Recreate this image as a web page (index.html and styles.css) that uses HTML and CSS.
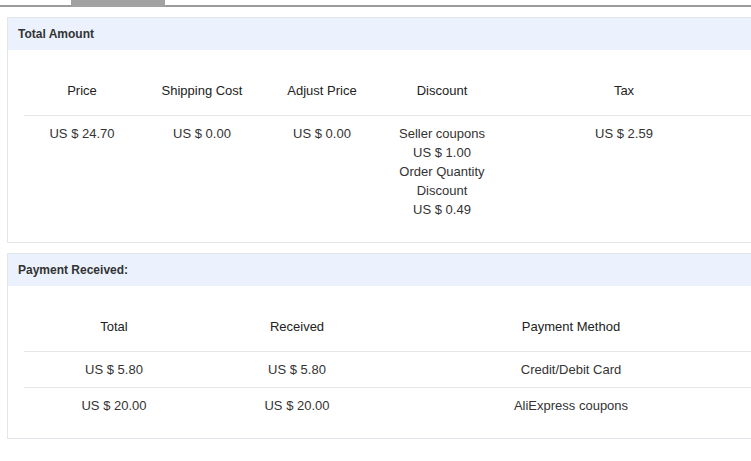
FILE: index.html
```html
<!DOCTYPE html>
<html>
<head>
<meta charset="utf-8">
<link rel="stylesheet" href="styles.css">
</head>
<body>
<div class="tabbar"><div class="tab"></div></div>
<div class="content">
  <section class="panel">
    <div class="panel-head">Total Amount</div>
    <div class="panel-body">
      <table class="grid amount">
        <colgroup><col class="c1"><col class="c2"><col class="c3"><col class="c4"><col class="c5"><col class="c6"></colgroup>
        <thead>
          <tr><th>Price</th><th>Shipping Cost</th><th>Adjust Price</th><th>Discount</th><th>Tax</th><th></th></tr>
        </thead>
        <tbody>
          <tr>
            <td>US $ 24.70</td>
            <td>US $ 0.00</td>
            <td>US $ 0.00</td>
            <td>Seller coupons<br>US $ 1.00<br>Order Quantity<br>Discount<br>US $ 0.49</td>
            <td>US $ 2.59</td>
            <td></td>
          </tr>
        </tbody>
      </table>
    </div>
  </section>
  <section class="panel">
    <div class="panel-head">Payment Received:</div>
    <div class="panel-body">
      <table class="grid payment">
        <colgroup><col class="p1"><col class="p2"><col class="p3"><col class="p4"></colgroup>
        <thead>
          <tr><th>Total</th><th>Received</th><th>Payment Method</th><th></th></tr>
        </thead>
        <tbody>
          <tr><td>US $ 5.80</td><td>US $ 5.80</td><td>Credit/Debit Card</td><td></td></tr>
          <tr class="last"><td>US $ 20.00</td><td>US $ 20.00</td><td>AliExpress coupons</td><td></td></tr>
        </tbody>
      </table>
    </div>
  </section>
</div>
</body>
</html>
```
FILE: styles.css
```css
html, body {
  margin: 0;
  padding: 0;
  background: #fff;
  overflow: hidden;
}
body {
  font-family: "Liberation Sans", Arial, sans-serif;
  font-size: 13px;
  color: #333;
  width: 751px;
}
.tabbar {
  height: 7px;
  position: relative;
  border-bottom: 2px solid #9b9b9b;
  box-sizing: border-box;
}
.tab {
  position: absolute;
  left: 71px;
  top: 0;
  width: 94px;
  height: 7px;
  background: #a2a2a2;
}
.content {
  padding: 10px 0 0 7px;
}
.panel {
  width: 780px;
  border: 1px solid #e2e6eb;
  margin-bottom: 10px;
  background: #fff;
}
.panel-head {
  height: 32px;
  line-height: 33px;
  background: #ebf2fd;
  font-weight: bold;
  font-size: 12px;
  padding-left: 10px;
  color: #333;
}
.panel-body {
  padding: 15px 0 15px 16px;
}
.grid {
  border-collapse: collapse;
  table-layout: fixed;
  width: 760px;
}
.grid th {
  font-weight: normal;
  height: 50px;
  padding: 0;
  vertical-align: middle;
  text-align: center;
  border-bottom: 1px solid #e6e6e6;
  color: #222;
}
.grid td {
  padding: 8px 0;
  line-height: 19px;
  text-align: center;
  vertical-align: top;
}
.payment tbody tr {
  border-bottom: 1px solid #e6e6e6;
}
.payment tbody tr.last {
  border-bottom: none;
}
.c1 { width: 116px; }
.c2 { width: 124px; }
.c3 { width: 116px; }
.c4 { width: 124px; }
.c5 { width: 240px; }
.c6 { width: 40px; }
.p1 { width: 180px; }
.p2 { width: 186px; }
.p3 { width: 362px; }
.p4 { width: 32px; }
```
